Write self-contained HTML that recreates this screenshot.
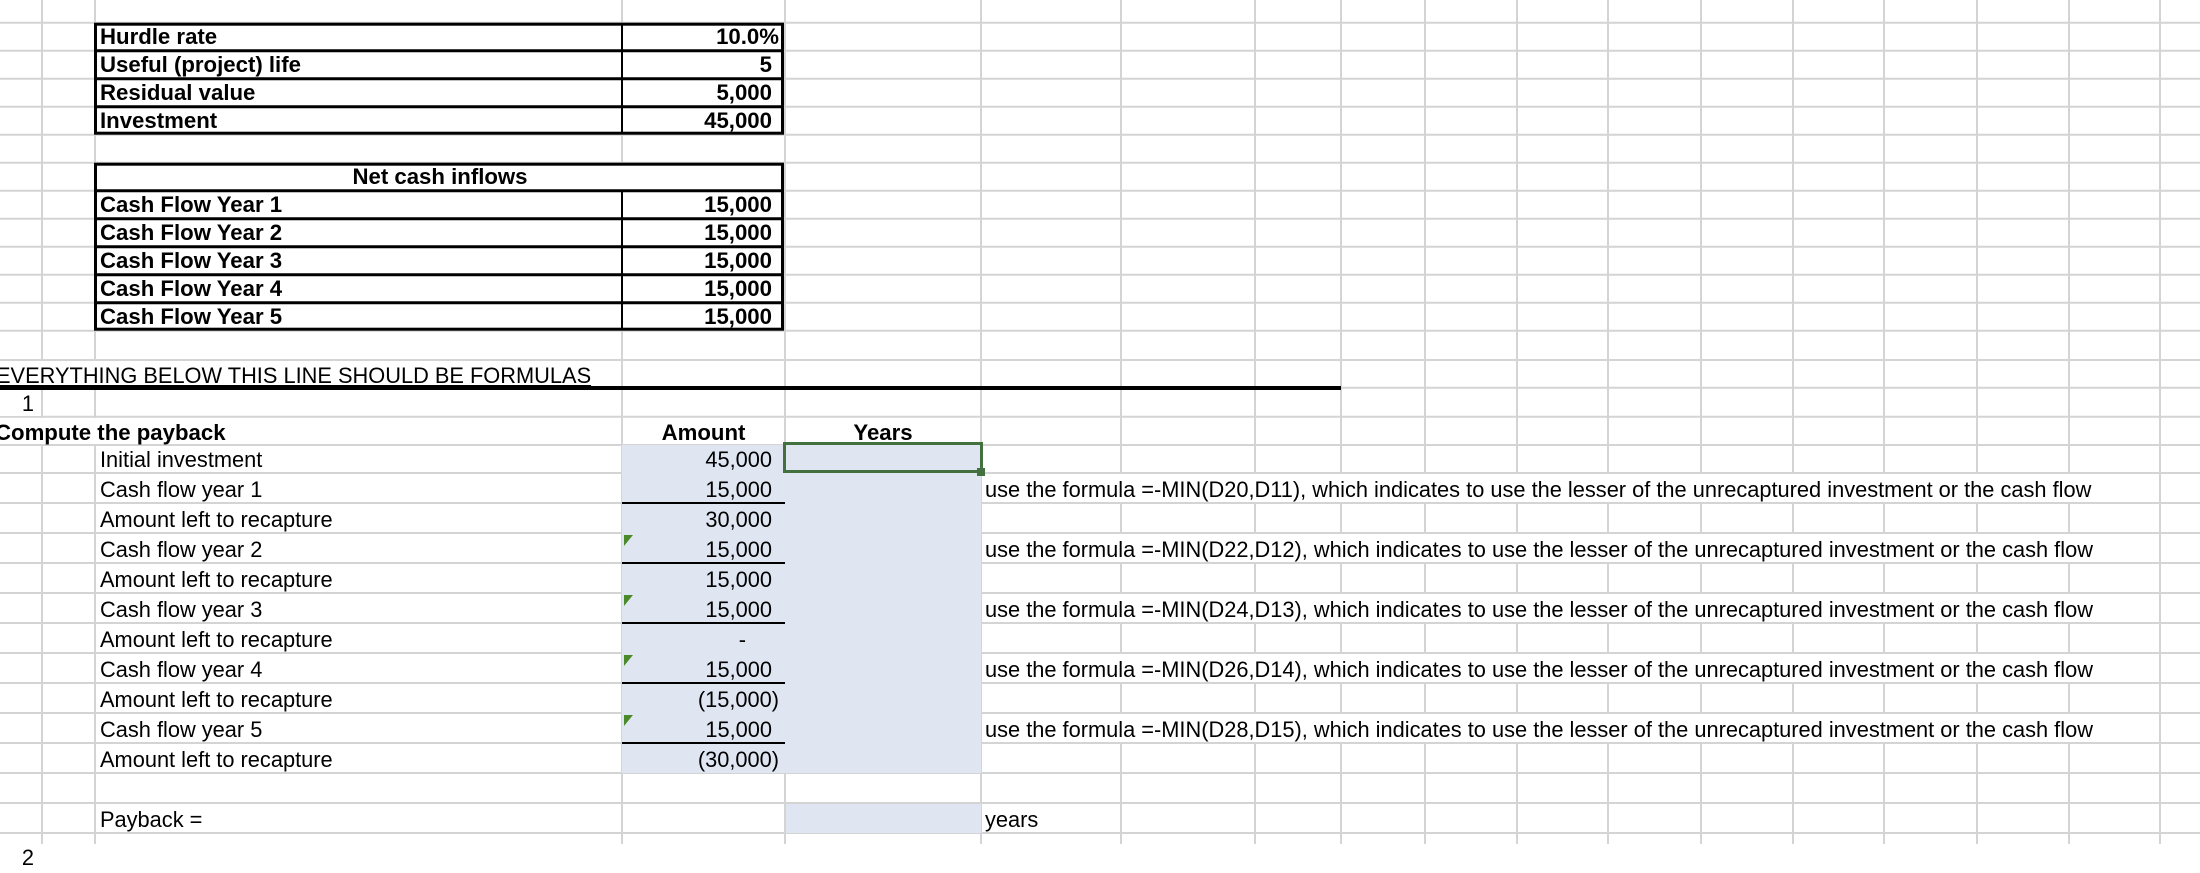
<!DOCTYPE html>
<html><head><meta charset="utf-8">
<style>
*{margin:0;padding:0;box-sizing:border-box}
body{width:2200px;height:844px;overflow:hidden;background:#fff;position:relative;font-family:"Liberation Sans",Arial,sans-serif;font-size:21.8px;color:#000}
.a{position:absolute}
.t{position:absolute;white-space:nowrap;display:flex;align-items:center;line-height:1}
.b{font-weight:bold;font-size:22.2px}
.r{justify-content:flex-end}
.c{justify-content:center}
.tri{position:absolute;width:0;height:0;border-top:11px solid #4b8a2b;border-right:9px solid transparent}
</style></head><body>
<svg class="a" style="left:0;top:0" width="2200" height="844">
<g stroke="#d4d4d4" stroke-width="2">
<line x1="42" y1="0" x2="42" y2="844"/><line x1="95" y1="0" x2="95" y2="844"/>
<line x1="622" y1="0" x2="622" y2="844"/><line x1="785" y1="0" x2="785" y2="844"/>
<line x1="981" y1="0" x2="981" y2="844"/><line x1="1121" y1="0" x2="1121" y2="844"/>
<line x1="1255" y1="0" x2="1255" y2="844"/><line x1="1341" y1="0" x2="1341" y2="844"/>
<line x1="1425" y1="0" x2="1425" y2="844"/><line x1="1517" y1="0" x2="1517" y2="844"/>
<line x1="1608" y1="0" x2="1608" y2="844"/><line x1="1701" y1="0" x2="1701" y2="844"/>
<line x1="1793" y1="0" x2="1793" y2="844"/><line x1="1884" y1="0" x2="1884" y2="844"/>
<line x1="1977" y1="0" x2="1977" y2="844"/><line x1="2069" y1="0" x2="2069" y2="844"/>
<line x1="2160" y1="0" x2="2160" y2="844"/>
<line x1="0" y1="22.7" x2="2200" y2="22.7"/><line x1="0" y1="50.7" x2="2200" y2="50.7"/>
<line x1="0" y1="78.7" x2="2200" y2="78.7"/><line x1="0" y1="106.7" x2="2200" y2="106.7"/>
<line x1="0" y1="134.7" x2="2200" y2="134.7"/><line x1="0" y1="162.7" x2="2200" y2="162.7"/>
<line x1="0" y1="190.7" x2="2200" y2="190.7"/><line x1="0" y1="218.7" x2="2200" y2="218.7"/>
<line x1="0" y1="246.7" x2="2200" y2="246.7"/><line x1="0" y1="274.7" x2="2200" y2="274.7"/>
<line x1="0" y1="302.7" x2="2200" y2="302.7"/><line x1="0" y1="330.7" x2="2200" y2="330.7"/>
<line x1="0" y1="360" x2="2200" y2="360"/><line x1="0" y1="387.7" x2="2200" y2="387.7"/>
<line x1="0" y1="416.7" x2="2200" y2="416.7"/><line x1="0" y1="445" x2="2200" y2="445"/>
<line x1="0" y1="473" x2="2200" y2="473"/><line x1="0" y1="503" x2="2200" y2="503"/>
<line x1="0" y1="533" x2="2200" y2="533"/><line x1="0" y1="563" x2="2200" y2="563"/>
<line x1="0" y1="593" x2="2200" y2="593"/><line x1="0" y1="623" x2="2200" y2="623"/>
<line x1="0" y1="653" x2="2200" y2="653"/><line x1="0" y1="683" x2="2200" y2="683"/>
<line x1="0" y1="713" x2="2200" y2="713"/><line x1="0" y1="743" x2="2200" y2="743"/>
<line x1="0" y1="773" x2="2200" y2="773"/><line x1="0" y1="803" x2="2200" y2="803"/>
<line x1="0" y1="833" x2="2200" y2="833"/>
</g>
<rect x="0" y="361" width="621" height="26" fill="#fff"/>
<rect x="0" y="389" width="41" height="27" fill="#fff"/>
<rect x="0" y="418" width="621" height="26" fill="#fff"/>
<!-- hide verticals behind formula text -->
<g fill="#fff">
<rect x="982" y="474" width="1177" height="28"/>
<rect x="982" y="534" width="1177" height="28"/>
<rect x="982" y="594" width="1177" height="28"/>
<rect x="982" y="654" width="1177" height="28"/>
<rect x="982" y="714" width="1177" height="28"/>
</g>
<rect x="622" y="445" width="359" height="328" fill="#dfe6f2"/>
<rect x="786" y="804" width="195" height="29" fill="#dfe6f2"/>
<rect x="95.5" y="24.2" width="687" height="109" fill="#fff" stroke="#000" stroke-width="3"/>
<g stroke="#000" stroke-width="3">
<line x1="95" y1="50.7" x2="784" y2="50.7"/><line x1="95" y1="78.7" x2="784" y2="78.7"/><line x1="95" y1="106.7" x2="784" y2="106.7"/>
</g>
<line x1="622" y1="23" x2="622" y2="134" stroke="#000" stroke-width="2"/>
<rect x="95.5" y="164.2" width="687" height="165" fill="#fff" stroke="#000" stroke-width="3"/>
<g stroke="#000" stroke-width="3">
<line x1="95" y1="190.7" x2="784" y2="190.7"/><line x1="95" y1="218.7" x2="784" y2="218.7"/><line x1="95" y1="246.7" x2="784" y2="246.7"/><line x1="95" y1="274.7" x2="784" y2="274.7"/><line x1="95" y1="302.7" x2="784" y2="302.7"/>
</g>
<line x1="622" y1="190" x2="622" y2="330" stroke="#000" stroke-width="2"/>
<rect x="0" y="386" width="1341" height="4" fill="#000"/>
<g stroke="#000" stroke-width="2">
<line x1="622" y1="503" x2="785" y2="503"/><line x1="622" y1="563" x2="785" y2="563"/><line x1="622" y1="623" x2="785" y2="623"/><line x1="622" y1="683" x2="785" y2="683"/><line x1="622" y1="743" x2="785" y2="743"/>
</g>
<rect x="784.5" y="443.5" width="197" height="28" fill="none" stroke="#43703f" stroke-width="3"/>
<rect x="977" y="468" width="8" height="8" fill="#43703f"/>
</svg>

<div class="tri" style="left:624px;top:535px"></div>
<div class="tri" style="left:624px;top:595px"></div>
<div class="tri" style="left:624px;top:655px"></div>
<div class="tri" style="left:624px;top:715px"></div>

<div class="t b" style="left:100px;top:23px;height:28px">Hurdle rate</div>
<div class="t b r" style="left:622px;width:157px;top:23px;height:28px">10.0%</div>
<div class="t b" style="left:100px;top:51px;height:28px">Useful (project) life</div>
<div class="t b r" style="left:622px;width:150px;top:51px;height:28px">5</div>
<div class="t b" style="left:100px;top:79px;height:28px">Residual value</div>
<div class="t b r" style="left:622px;width:150px;top:79px;height:28px">5,000</div>
<div class="t b" style="left:100px;top:107px;height:28px">Investment</div>
<div class="t b r" style="left:622px;width:150px;top:107px;height:28px">45,000</div>

<div class="t b c" style="left:95px;width:690px;top:163px;height:28px">Net cash inflows</div>
<div class="t b" style="left:100px;top:191px;height:28px">Cash Flow Year 1</div>
<div class="t b r" style="left:622px;width:150px;top:191px;height:28px">15,000</div>
<div class="t b" style="left:100px;top:219px;height:28px">Cash Flow Year 2</div>
<div class="t b r" style="left:622px;width:150px;top:219px;height:28px">15,000</div>
<div class="t b" style="left:100px;top:247px;height:28px">Cash Flow Year 3</div>
<div class="t b r" style="left:622px;width:150px;top:247px;height:28px">15,000</div>
<div class="t b" style="left:100px;top:275px;height:28px">Cash Flow Year 4</div>
<div class="t b r" style="left:622px;width:150px;top:275px;height:28px">15,000</div>
<div class="t b" style="left:100px;top:303px;height:28px">Cash Flow Year 5</div>
<div class="t b r" style="left:622px;width:150px;top:303px;height:28px">15,000</div>

<div class="t" style="left:-4px;top:362px;height:28px;text-decoration:underline">EVERYTHING BELOW THIS LINE SHOULD BE FORMULAS</div>
<div class="t r" style="left:0;width:34px;top:390px;height:28px">1</div>
<div class="t b" style="left:-5px;top:419px;height:28px">Compute the payback</div>
<div class="t b c" style="left:622px;width:163px;top:419px;height:28px">Amount</div>
<div class="t b c" style="left:785px;width:196px;top:419px;height:28px">Years</div>

<div class="t" style="left:100px;top:446px;height:28px">Initial investment</div>
<div class="t r" style="left:622px;width:150px;top:446px;height:28px">45,000</div>
<div class="t" style="left:100px;top:475px;height:30px">Cash flow year 1</div>
<div class="t r" style="left:622px;width:150px;top:475px;height:30px">15,000</div>
<div class="t" style="left:100px;top:505px;height:30px">Amount left to recapture</div>
<div class="t r" style="left:622px;width:150px;top:505px;height:30px">30,000</div>
<div class="t" style="left:100px;top:535px;height:30px">Cash flow year 2</div>
<div class="t r" style="left:622px;width:150px;top:535px;height:30px">15,000</div>
<div class="t" style="left:100px;top:565px;height:30px">Amount left to recapture</div>
<div class="t r" style="left:622px;width:150px;top:565px;height:30px">15,000</div>
<div class="t" style="left:100px;top:595px;height:30px">Cash flow year 3</div>
<div class="t r" style="left:622px;width:150px;top:595px;height:30px">15,000</div>
<div class="t" style="left:100px;top:625px;height:30px">Amount left to recapture</div>
<div class="t r" style="left:622px;width:124px;top:625px;height:30px">-</div>
<div class="t" style="left:100px;top:655px;height:30px">Cash flow year 4</div>
<div class="t r" style="left:622px;width:150px;top:655px;height:30px">15,000</div>
<div class="t" style="left:100px;top:685px;height:30px">Amount left to recapture</div>
<div class="t r" style="left:622px;width:157px;top:685px;height:30px">(15,000)</div>
<div class="t" style="left:100px;top:715px;height:30px">Cash flow year 5</div>
<div class="t r" style="left:622px;width:150px;top:715px;height:30px">15,000</div>
<div class="t" style="left:100px;top:745px;height:30px">Amount left to recapture</div>
<div class="t r" style="left:622px;width:157px;top:745px;height:30px">(30,000)</div>
<div class="t" style="left:100px;top:805px;height:30px">Payback =</div>
<div class="t" style="left:985px;top:805px;height:30px">years</div>
<div class="t r" style="left:0;width:34px;top:843px;height:30px">2</div>

<div class="t" style="left:985px;top:475px;height:30px">use the formula =-MIN(D20,D11), which indicates to use the lesser of the unrecaptured investment or the cash flow</div>
<div class="t" style="left:985px;top:535px;height:30px">use the formula =-MIN(D22,D12), which indicates to use the lesser of the unrecaptured investment or the cash flow</div>
<div class="t" style="left:985px;top:595px;height:30px">use the formula =-MIN(D24,D13), which indicates to use the lesser of the unrecaptured investment or the cash flow</div>
<div class="t" style="left:985px;top:655px;height:30px">use the formula =-MIN(D26,D14), which indicates to use the lesser of the unrecaptured investment or the cash flow</div>
<div class="t" style="left:985px;top:715px;height:30px">use the formula =-MIN(D28,D15), which indicates to use the lesser of the unrecaptured investment or the cash flow</div>
</body></html>
